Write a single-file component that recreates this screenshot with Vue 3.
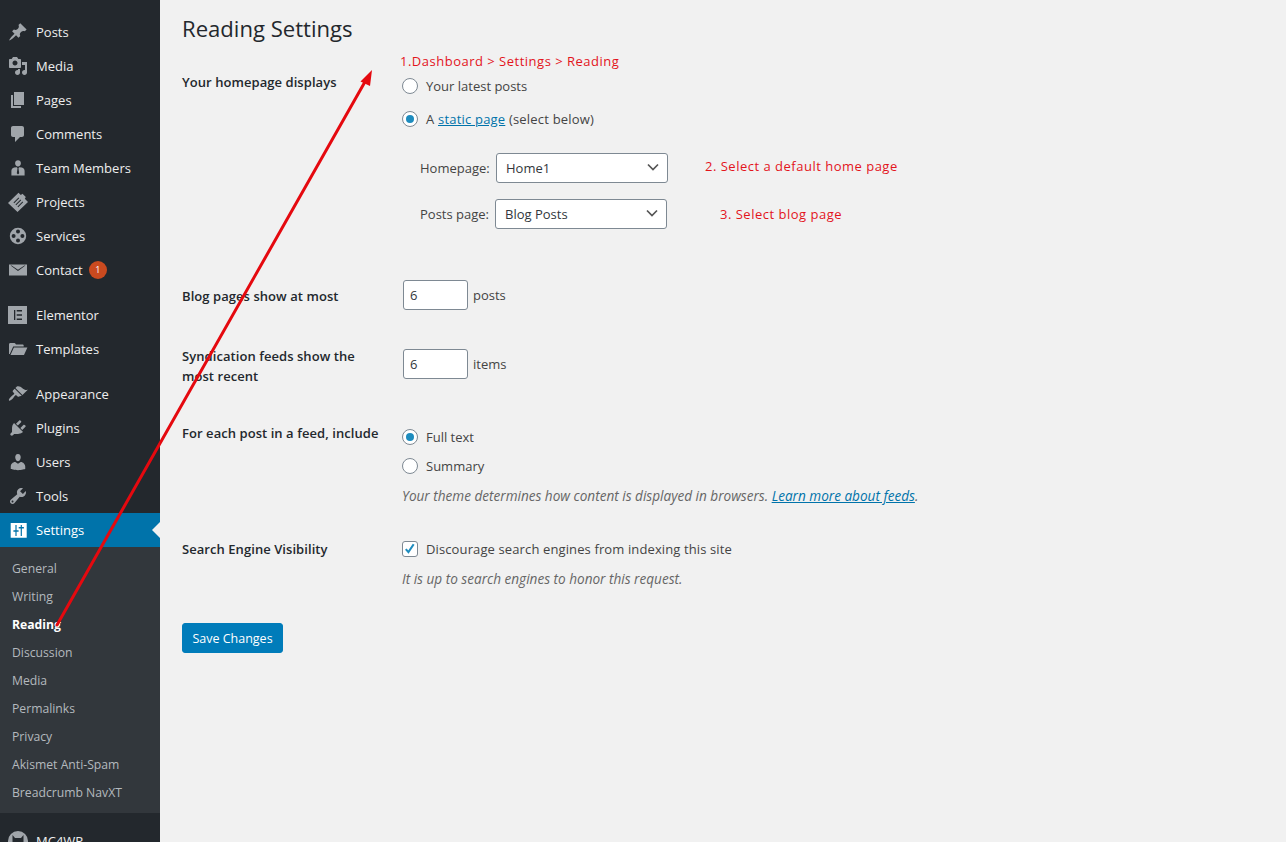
<script setup>
const topMenu = [
  { name: 'Posts', icon: 'M10.44 3.02l1.82-1.82 6.36 6.35-1.83 1.82c-1.05-.68-2.48-.57-3.41.36l-.75.75c-.92.93-1.04 2.35-.35 3.41l-1.83 1.82-2.41-2.41-2.8 2.79c-.42.42-3.38 2.71-3.8 2.29s1.86-3.39 2.28-3.81l2.79-2.79L4.1 9.36l1.83-1.82c1.05.69 2.48.57 3.4-.36l.75-.75c.93-.92 1.05-2.35.36-3.41z' },
  { name: 'Media', icon: 'M13 11V4c0-.55-.45-1-1-1h-1.67L9 1H5L3.67 3H2c-.55 0-1 .45-1 1v7c0 .55.45 1 1 1h10c.55 0 1-.45 1-1zM7 4.5c1.38 0 2.5 1.12 2.5 2.5S8.38 9.5 7 9.5 4.5 8.38 4.5 7 5.62 4.5 7 4.5zM14 6h5v10.5c0 1.38-1.12 2.5-2.5 2.5S14 17.88 14 16.5s1.12-2.5 2.5-2.5c.17 0 .34.02.5.05V9h-3V6zm-4 8.05V13h2v3.5c0 1.38-1.12 2.5-2.5 2.5S7 17.88 7 16.5 8.12 14 9.5 14c.17 0 .34.02.5.05z' },
  { name: 'Pages', icon: 'M6 15V2h10v13H6zm-1 1h8v2H3V5h2v11z' },
  { name: 'Comments', icon: 'M5 2h9c1.1 0 2 .9 2 2v7c0 1.1-.9 2-2 2h-2l-5 5v-5H5c-1.1 0-2-.9-2-2V4c0-1.1.9-2 2-2z' },
  { name: 'Team Members', icon: 'M10 2.2c1.7 0 2.9 1.3 2.9 3s-1.2 3.4-2.9 3.4-2.9-1.7-2.9-3.4 1.2-3 2.9-3zM6.2 9.6l2.6-.4.7 1.1-.7 5 1.2 1.3 1.2-1.3-.7-5 .7-1.1 2.6.4c1.8.4 2.8 1.6 2.8 3.4V17.6H3.4V13c0-1.8 1-3 2.8-3.4z' },
  { name: 'Projects', icon: 'M0 11L10.5.8 12.800 3l1.700-1.200 3.300 3.200-1 1.800L20 10 9.500 20zM5.500 10.500l5-5 .7.7-5 5zM7.500 12.500l5-5 .7.7-5 5zM9.500 14.500l5-5 .7.7-5 5z' },
  { name: 'Services', icon: 'M10 1.800a8.200 8.200 0 1 1 0 16.400 8.200 8.200 0 0 1 0-16.400zM10 3.600a2 2 0 1 0 0 4 2 2 0 0 0 0-4zM10 12.400a2 2 0 1 0 0 4 2 2 0 0 0 0-4zM5.600 8a2 2 0 1 0 0 4 2 2 0 0 0 0-4zM14.400 8a2 2 0 1 0 0 4 2 2 0 0 0 0-4z' },
  { name: 'Contact', badge: '1', icon: 'M1 4.500h18v11H1zM2.600 5.600L10 11l7.400-5.400-1-.1L10 9.800 3.600 5.500z' },
]
const midMenu = [
  { name: 'Elementor', icon: 'M0 1h19v18H0zM6 5v10h1.300V5zM8.700 5v1.500H14V5zM8.700 9.200v1.500H14V9.200zM8.700 13.500V15H14v-1.500z' },
  { name: 'Templates', icon: 'M1 5.500c0-1 .6-1.500 1.500-1.500h3.800c.7 0 1 .3 1.300.9l.4.6h6.500c.7 0 1.200.4 1.200 1.200v.8H5.200L1.800 15H1zM5.900 8.600H19.400L16 16H2.500z' },
]
const lowMenu = [
  { name: 'Appearance', icon: 'M14.48 11.06L7.41 3.99l1.5-1.5c.5-.56 2.3-.47 3.51.32 1.21.8 1.43 1.28 2.91 2.1 1.18.64 2.45 1.26 4.45.85zm-.71.71L6.7 4.7 4.93 6.47c-.39.39-.39 1.02 0 1.41l1.06 1.06c.39.39.39 1.03 0 1.42-.6.6-1.43 1.11-2.21 1.69-.35.26-.7.53-1.01.84-1.34 1.34-2.36 2.96-1.75 3.58.62.61 2.24-.41 3.58-1.75.31-.31.58-.66.84-1.01.58-.78 1.09-1.61 1.69-2.21.39-.39 1.03-.39 1.42 0l1.06 1.06c.39.39 1.02.39 1.41 0z' },
  { name: 'Plugins', icon: 'M13.11 4.36L9.87 7.6 8 5.73l3.24-3.24c.35-.34 1.05-.2 1.56.32.52.51.66 1.21.31 1.55zm-8 1.77l.91-1.12 9.01 9.01-1.19.84c-.71.71-2.63 1.16-3.82 1.16H6.14L4.9 17.26c-.59.59-1.54.59-2.12 0-.59-.58-.59-1.53 0-2.12l1.24-1.24v-3.88c0-1.13.4-3.19 1.09-3.89zm7.26 3.97l3.24-3.24c.34-.35 1.04-.21 1.55.31.52.51.66 1.21.31 1.55l-3.24 3.25z' },
  { name: 'Users', icon: 'M10 9.25c-2.27 0-2.73-3.44-2.73-3.44C7 4.02 7.82 2 9.97 2c2.16 0 2.98 2.02 2.71 3.81 0 0-.41 3.44-2.68 3.44zm0 2.57L12.72 10c2.39 0 4.52 2.33 4.52 4.53v2.49s-3.65 1.13-7.24 1.13c-3.65 0-7.24-1.13-7.24-1.13v-2.49c0-2.25 1.94-4.48 4.47-4.48z' },
  { name: 'Tools', icon: 'M16.68 9.77c-1.34 1.34-3.3 1.67-4.95.99l-5.41 6.52c-.99.99-2.59.99-3.58 0s-.99-2.59 0-3.57l6.52-5.42c-.68-1.65-.35-3.61.99-4.95 1.28-1.28 3.12-1.62 4.72-1.06l-2.89 2.89 2.82 2.82 2.86-2.87c.53 1.58.18 3.39-1.08 4.65zM3.81 16.21c.4.39 1.04.39 1.43 0 .4-.4.4-1.04 0-1.43-.39-.4-1.03-.4-1.43 0-.39.39-.39 1.03 0 1.43z' },
]
const settingsIcon = 'M2.700 3h16v14.700h-16zM7.400 5v5.200h-2v1.600h2V16h1.200v-4.200h2v-1.600h-2V5zM12.700 5v1.900h-2v1.600h2V16h1.200V8.500h2V6.900h-2V5z'
const subMenu = ['General', 'Writing', 'Reading', 'Discussion', 'Media', 'Permalinks', 'Privacy', 'Akismet Anti-Spam', 'Breadcrumb NavXT']
</script>

<template>
  <div class="page">
    <aside class="sidebar">
      <ul class="menu first">
        <li v-for="m in topMenu" :key="m.name" class="item">
          <svg class="icon" viewBox="0 0 20 20"><path :d="m.icon" fill-rule="evenodd" /></svg>
          <span>{{ m.name }}</span>
          <span v-if="m.badge" class="badge">{{ m.badge }}</span>
        </li>
      </ul>
      <ul class="menu">
        <li v-for="m in midMenu" :key="m.name" class="item">
          <svg class="icon" viewBox="0 0 20 20"><path :d="m.icon" fill-rule="evenodd" /></svg>
          <span>{{ m.name }}</span>
        </li>
      </ul>
      <ul class="menu">
        <li v-for="m in lowMenu" :key="m.name" class="item">
          <svg class="icon" viewBox="0 0 20 20"><path :d="m.icon" fill-rule="evenodd" /></svg>
          <span>{{ m.name }}</span>
        </li>
        <li class="item active">
          <svg class="icon" viewBox="0 0 20 20"><path :d="settingsIcon" fill-rule="evenodd" /></svg>
          <span>Settings</span>
        </li>
      </ul>
      <ul class="submenu">
        <li v-for="s in subMenu" :key="s" :class="{ current: s === 'Reading' }">{{ s }}</li>
      </ul>
      <ul class="menu">
        <li class="item">
          <svg class="icon" viewBox="0 0 20 20"><path fill-rule="evenodd" d="M10 0a10 10 0 1 1 0 20 10 10 0 0 1 0-20zM4.500 4v9h11V4l-2.500 3h-6z" /></svg>
          <span>MC4WP</span>
        </li>
      </ul>
    </aside>

    <main class="main">
      <h1>Reading Settings</h1>

      <section class="row row-home">
        <div class="label">Your homepage displays</div>
        <div class="field">
          <label class="option tall"><input type="radio" name="front" />Your latest posts</label>
          <label class="option tall wide"><input type="radio" name="front" checked />A&nbsp;<a>static page</a>&nbsp;(select below)</label>
          <div class="pick pick-home">
            <span class="pick-label">Homepage:</span>
            <span class="select">Home1<svg viewBox="0 0 16 16"><path d="M3 5.500l5 5 5-5" /></svg></span>
          </div>
          <div class="pick pick-posts">
            <span class="pick-label">Posts page:</span>
            <span class="select">Blog Posts<svg viewBox="0 0 16 16"><path d="M3 5.500l5 5 5-5" /></svg></span>
          </div>
        </div>
      </section>

      <section class="row row-blog">
        <div class="label">Blog pages show at most</div>
        <div class="field inline"><input class="num" type="text" value="6" /><span>posts</span></div>
      </section>

      <section class="row row-feed">
        <div class="label">Syndication feeds show the most recent</div>
        <div class="field inline"><input class="num" type="text" value="6" /><span>items</span></div>
      </section>

      <section class="row row-include">
        <div class="label">For each post in a feed, include</div>
        <div class="field">
          <label class="option"><input type="radio" name="feed" checked />Full text</label>
          <label class="option"><input type="radio" name="feed" />Summary</label>
          <p class="desc desc-feed">Your theme determines how content is displayed in browsers. <a>Learn more about feeds</a>.</p>
        </div>
      </section>

      <section class="row row-search">
        <div class="label">Search Engine Visibility</div>
        <div class="field">
          <label class="option check"><span class="box"><svg viewBox="0 0 16 16"><path d="M3.200 8.200l3 3.400 6-9" /></svg></span>Discourage search engines from indexing this site</label>
          <p class="desc desc-search">It is up to search engines to honor this request.</p>
        </div>
      </section>

      <button class="save" type="button">Save Changes</button>
    </main>

    <span class="note note1">1.Dashboard &gt; Settings &gt; Reading</span>
    <span class="note note2">2. Select a default home page</span>
    <span class="note note3">3. Select blog page</span>
    <svg class="arrow" viewBox="0 0 1286 842">
      <path d="M57 625L366 80" stroke="#e5090f" stroke-width="3" fill="none" stroke-linecap="round" />
      <path d="M372 70l-11.500 11.500 9.500 4.500z" fill="#e5090f" />
    </svg>
  </div>
</template>

<style>
html, body { margin: 0; padding: 0; background: #f1f1f1; }
</style>

<style scoped>
.page {
  position: relative;
  display: flex;
  width: 1286px;
  height: 842px;
  overflow: hidden;
  background: #f1f1f1;
  color: #444;
  font: 13px/20px "Open Sans", "Noto Sans", sans-serif;
}
ul { list-style: none; margin: 0; padding: 0; }

.sidebar {
  flex: 0 0 160px;
  background: #23282d;
  color: #eee;
  font-size: 13px;
  padding-top: 15px;
  height: 842px;
  box-sizing: border-box;
  overflow: hidden;
}
.menu { margin-bottom: 11px; }
.item {
  position: relative;
  display: flex;
  align-items: center;
  height: 34px;
  padding-left: 8px;
}
.icon { width: 20px; height: 20px; margin-right: 8px; fill: #a0a5aa; flex: none; }
.badge {
  width: 18px;
  height: 18px;
  margin-left: 6px;
  border-radius: 50%;
  background: #ca4a1f;
  color: #fff;
  font-size: 9px;
  line-height: 18px;
  text-align: center;
}
.menu:has(.active) { margin-bottom: 0; }
.active { background: #0073aa; color: #fff; }
.active .icon { fill: #fff; }
.active::after {
  content: "";
  position: absolute;
  right: 0;
  top: 9px;
  border: 8px solid transparent;
  border-right-color: #f1f1f1;
  border-left-width: 0;
}
.submenu {
  background: #32373c;
  padding: 8px 0 6px;
  margin-bottom: 11px;
  color: #b4b9be;
  font-size: 12.200px;
}
.submenu li { height: 28px; line-height: 28px; padding-left: 12px; }
.submenu .current { color: #fff; font-weight: 700; }

.main { flex: 1; padding-left: 22px; }
h1 {
  margin: 0;
  height: 58px;
  line-height: 56px;
  font-size: 22.100px;
  font-weight: 400;
  color: #23282d;
}
.row { display: grid; grid-template-columns: 220px 1fr; width: 900px; }
.label { color: #23282d; font-weight: 600; width: 205px; letter-spacing: .06px; }
.row-home .label { padding-top: 14px; }
.row-home .field { padding-top: 11px; }
.row-blog { margin-top: 41px; }
.row-blog .label { padding-top: 16px; }
.row-blog .field { padding-top: 10px; }
.row-feed { margin-top: 29px; }
.row-feed .label { padding-top: 7px; }
.row-feed .field { padding-top: 10px; }
.row-include { margin-top: 27px; }
.row-include .label { padding-top: 10px; }
.row-include .field { padding-top: 9px; }
.row-search { margin-top: 33px; }

.option { display: flex; align-items: center; height: 29px; }
.option.tall { height: 33px; }
.option.wide { letter-spacing: .2px; }
.option.check { height: 20px; letter-spacing: .12px; }
input[type="radio"] {
  appearance: none;
  flex: none;
  box-sizing: border-box;
  width: 16px;
  height: 16px;
  margin: 0 8px 0 0;
  border: 1px solid #7e8993;
  border-radius: 50%;
  background: #fff;
  display: grid;
  place-items: center;
}
input[type="radio"]:checked::before {
  content: "";
  width: 8px;
  height: 8px;
  border-radius: 50%;
  background: #1e8cbe;
}
a { color: #0073aa; text-decoration: underline; }
.box {
  flex: none;
  box-sizing: border-box;
  width: 16px;
  height: 16px;
  margin: 0 8px 0 0;
  border: 1px solid #7e8993;
  border-radius: 3px;
  background: #fff;
  display: grid;
  place-items: center;
}
.box svg { width: 14px; height: 14px; fill: none; stroke: #1e8cbe; stroke-width: 2.400; }

.pick { display: flex; align-items: center; height: 30px; padding-left: 18px; }
.pick-home { margin-top: 18px; }
.pick-posts { margin-top: 16px; }
.pick-label { width: 76px; }
.pick-posts .pick-label { width: 75px; }
.select {
  position: relative;
  box-sizing: border-box;
  width: 172px;
  height: 30px;
  padding-left: 9px;
  line-height: 28px;
  border: 1px solid #7e8993;
  border-radius: 3px;
  background: #fff;
  color: #32373c;
}
.select svg {
  position: absolute;
  right: 6px;
  top: 5px;
  width: 16px;
  height: 16px;
  fill: none;
  stroke: #555;
  stroke-width: 1.700;
}
.inline { display: flex; align-items: flex-start; }
.inline span { margin-left: 5px; line-height: 30px; }
.num {
  box-sizing: border-box;
  width: 65px;
  height: 30px;
  margin-left: 1px;
  padding: 0 6px;
  border: 1px solid #7e8993;
  border-radius: 3px;
  background: #fff;
  color: #32373c;
  font: inherit;
  outline: none;
}
.desc { margin: 0; font-style: italic; color: #666; font-size: 13.580px; }
.desc-feed { margin-top: 6px; }
.desc-search { margin-top: 10px; }
.save {
  display: block;
  width: 101px;
  height: 30px;
  margin-top: 34px;
  padding: 2px 0 0;
  border: 1px solid #007cba;
  border-radius: 3px;
  background: #007cba;
  color: #fff;
  font: inherit;
  font-size: 12.500px;
}
.note {
  position: absolute;
  color: #e3141c;
  font-size: 13px;
  line-height: 20px;
  letter-spacing: .5px;
  white-space: nowrap;
}
.note1 { left: 400px; top: 51px; }
.note2 { left: 705px; top: 156px; }
.note3 { left: 720px; top: 204px; }
.arrow { position: absolute; inset: 0; width: 1286px; height: 842px; pointer-events: none; }
</style>
